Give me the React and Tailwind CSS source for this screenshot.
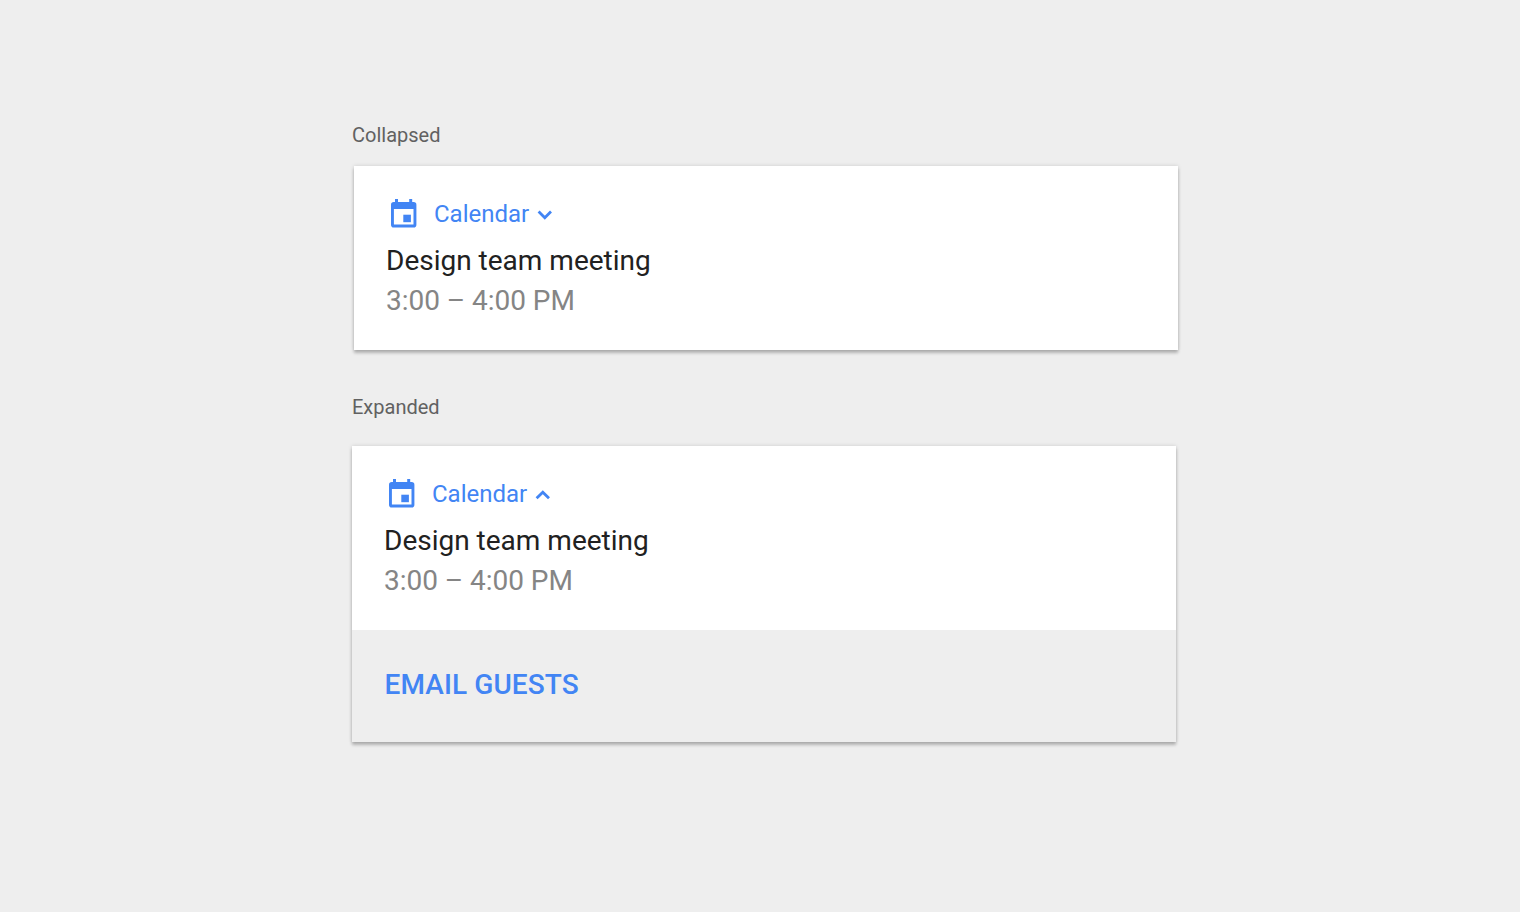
function CalendarIcon() {
  return (
    <svg viewBox="-0.6 0 27 29" className="mt-px h-[29px] w-[27px] shrink-0 fill-[#4285f4]" aria-hidden="true">
      <path
        fillRule="evenodd"
        d="M4.4 0h3v3h11.2V0h3v3h1.4a2.8 2.8 0 0 1 2.8 2.8v20a2.8 2.8 0 0 1-2.8 2.8H3.2a2.8 2.8 0 0 1-2.8-2.8v-20A2.8 2.8 0 0 1 3.2 3h1.2zM3.3 10.1v15.4h19.6V10.1z"
      />
      <path d="M12.7 15.7h7.6v7.5h-7.6z" />
    </svg>
  );
}

function Chevron({ up }) {
  return (
    <svg viewBox="0 0 16 10" className="h-2.5 w-4 fill-none stroke-[#4285f4] stroke-[2.8]" aria-hidden="true">
      <path d={up ? "M1.6 8.3L7.8 2.2l6.2 6.1" : "M1.6 1.6L7.8 7.7l6.2-6.1"} />
    </svg>
  );
}

function Notification({ expanded }) {
  return (
    <section className="w-[824px] bg-white shadow-[0_0_4px_rgba(0,0,0,0.14),0_3px_3px_rgba(0,0,0,0.23)]">
      <div className="h-[184px] px-8 pt-8">
        <header className="flex h-8 items-start pl-1 text-2xl leading-8 text-[#4285f4]">
          <CalendarIcon />
          <span className="ml-[17px] w-[95px] whitespace-nowrap">Calendar</span>
          <span className="mt-3 ml-2">
            <Chevron up={expanded} />
          </span>
        </header>
        <h2 className="mt-[11px] text-[28px] leading-10 text-[#212121]">Design team meeting</h2>
        <p className="text-[28px] leading-10 tracking-[-0.03px] text-[#858585]">3:00 – 4:00 PM</p>
      </div>
      {expanded && (
        <footer className="flex h-28 items-center bg-[#eeeeee] px-8 pb-0.5">
          <button className="pl-[0.5px] text-[28px] leading-10 font-medium tracking-[0.1px] text-[#4285f4]">EMAIL GUESTS</button>
        </footer>
      )}
    </section>
  );
}

export default function App() {
  return (
    <main className="h-[912px] w-[1520px] bg-[#eeeeee] pt-[123px] pl-[352px] font-[Roboto,sans-serif]">
      <h1 className="h-[43px] text-xl leading-6 text-[#616161]">Collapsed</h1>
      <div className="pl-0.5">
        <Notification />
      </div>
      <h1 className="mt-[45px] h-[51px] text-xl leading-6 text-[#616161]">Expanded</h1>
      <Notification expanded />
    </main>
  );
}
